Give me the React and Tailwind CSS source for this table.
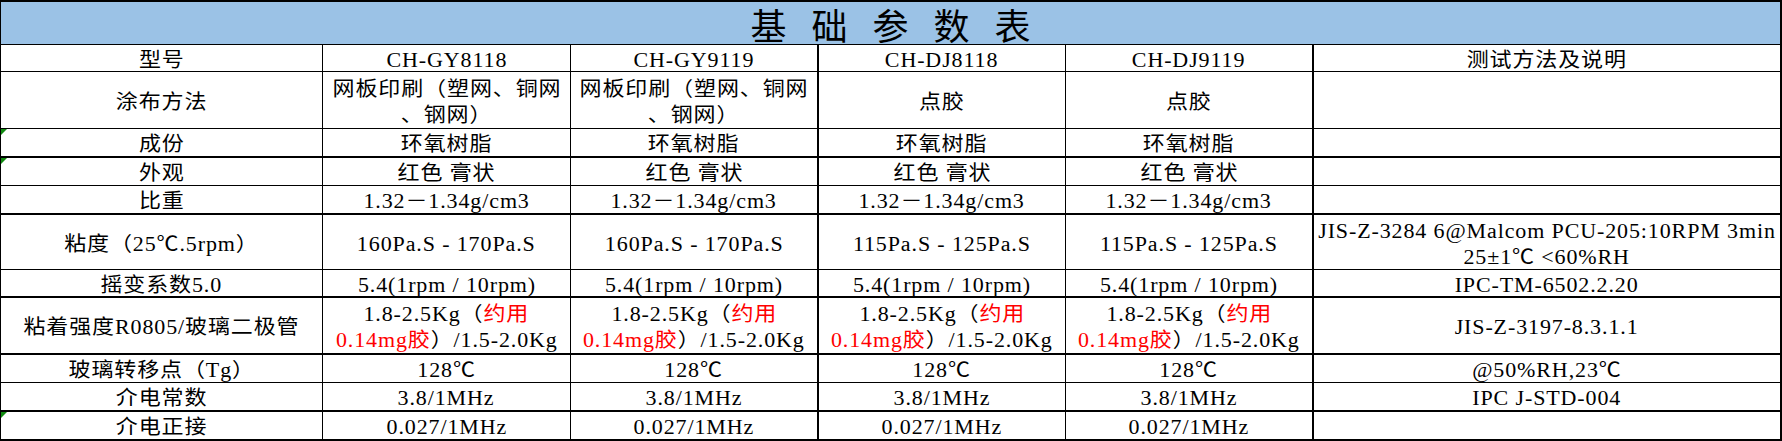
import React from "react";

const colBorder = ["border-r", "border-r", "border-r-2", "border-r", "border-r-2", ""];
const rowBorder = [
  "border-b",
  "border-b",
  "border-b-2",
  "border-b",
  "border-b-2",
  "border-b",
  "border-b-2",
  "border-b-2",
  "border-b",
  "border-b-2",
  "",
];

const red = (t) => ({ t, red: true });

const coat = [["网板印刷（塑网、铜网"], ["、钢网）"]];
const adhesion = [["1.8-2.5Kg（", red("约用")], [red("0.14mg胶"), "）/1.5-2.0Kg"]];

const rows = [
  ["型号", "CH-GY8118", "CH-GY9119", "CH-DJ8118", "CH-DJ9119", "测试方法及说明"],
  ["涂布方法", coat, coat, "点胶", "点胶", ""],
  ["成份", "环氧树脂", "环氧树脂", "环氧树脂", "环氧树脂", ""],
  ["外观", "红色 膏状", "红色 膏状", "红色 膏状", "红色 膏状", ""],
  ["比重", "1.32－1.34g/cm3", "1.32－1.34g/cm3", "1.32－1.34g/cm3", "1.32－1.34g/cm3", ""],
  [
    "粘度（25℃.5rpm）",
    "160Pa.S - 170Pa.S",
    "160Pa.S - 170Pa.S",
    "115Pa.S - 125Pa.S",
    "115Pa.S - 125Pa.S",
    [["JIS-Z-3284 6@Malcom PCU-205:10RPM 3min"], ["25±1℃ <60%RH"]],
  ],
  [
    "摇变系数5.0",
    "5.4(1rpm / 10rpm)",
    "5.4(1rpm / 10rpm)",
    "5.4(1rpm / 10rpm)",
    "5.4(1rpm / 10rpm)",
    "IPC-TM-6502.2.20",
  ],
  ["粘着强度R0805/玻璃二极管", adhesion, adhesion, adhesion, adhesion, "JIS-Z-3197-8.3.1.1"],
  ["玻璃转移点（Tg）", "128℃", "128℃", "128℃", "128℃", "@50%RH,23℃"],
  ["介电常数", "3.8/1MHz", "3.8/1MHz", "3.8/1MHz", "3.8/1MHz", "IPC J-STD-004"],
  ["介电正接", "0.027/1MHz", "0.027/1MHz", "0.027/1MHz", "0.027/1MHz", ""],
];

// rows whose first cell carries the little green marker
const flagged = [2, 3, 10];

const Cell = ({ content, border, flag }) => {
  const lines = typeof content === "string" ? [[content]] : content;
  return (
    <div className={`relative flex flex-col items-center justify-center pt-[3px] border-black ${border}`}>
      {flag && (
        <div className="absolute left-0 top-0 w-0 h-0 border-t-[6px] border-t-[#108a10] border-r-[6px] border-r-transparent" />
      )}
      {content !== "" &&
        lines.map((line, i) => (
          <span key={i} className="inline-block whitespace-nowrap scale-x-[1.1] tracking-[0.8px] leading-[26px]">
            {line.map((seg, j) =>
              typeof seg === "string" ? (
                <span key={j}>{seg}</span>
              ) : (
                <span key={j} className="text-[#ff0000]">
                  {seg.t}
                </span>
              )
            )}
          </span>
        ))}
    </div>
  );
};

export default function App() {
  return (
    <div className="w-[1782px] h-[441px] bg-white font-['Liberation_Serif','Noto_Sans_CJK_SC',serif] text-[20px] text-black">
      <div className="grid grid-cols-[322px_248px_248px_247px_248px_466px] grid-rows-[43px_27px_57px_29px_28px_29px_55px_28px_57px_28px_29px_27px] border-t-2 border-b-2 border-l border-r-2 border-black">
        <div className="col-span-6 flex items-end justify-center gap-[25px] bg-[#9bc2e6] border-b border-black text-[36px] leading-[40px] font-['Noto_Sans_CJK_SC',sans-serif]">
          <span>基</span>
          <span>础</span>
          <span>参</span>
          <span>数</span>
          <span>表</span>
        </div>
        {rows.map((row, r) =>
          row.map((content, c) => (
            <Cell
              key={`${r}-${c}`}
              content={content}
              border={`${rowBorder[r]} ${colBorder[c]}`}
              flag={c === 0 && flagged.includes(r)}
            />
          ))
        )}
      </div>
    </div>
  );
}
